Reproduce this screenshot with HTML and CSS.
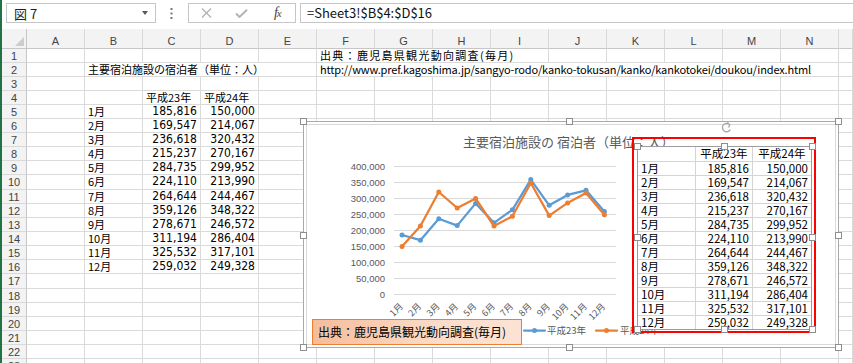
FILE: index.html
```html
<!DOCTYPE html>
<html lang="ja">
<head>
  <meta charset="UTF-8">
  <meta name="viewport" content="width=device-width, initial-scale=1.0">
  <title>主要宿泊施設の宿泊者</title>
  <link rel="stylesheet" href="styles.css">
</head>
<body>
  <div class="app">
    <div class="formula-bar">
      <div class="name-box"><span>図 7</span><span class="drop"></span></div>
      <svg class="dots" width="3" height="11" viewBox="0 0 3 11">
        <rect x="0.5" y="0" width="2" height="2"/>
        <rect x="0.5" y="4.5" width="2" height="2"/>
        <rect x="0.5" y="9" width="2" height="2"/>
      </svg>
      <div class="fx-box">
        <svg class="cancel" width="11" height="10" viewBox="0 0 11 10">
          <path d="M1 0.5 L10 9.5 M10 0.5 L1 9.5"/>
        </svg>
        <svg class="enter" width="13" height="9" viewBox="0 0 13 9">
          <path d="M1 4.5 L4.5 8 L12 0.8"/>
        </svg>
        <i class="fx">f<span>x</span></i>
      </div>
      <div class="formula-input">=Sheet3!$B$4:$D$16</div>
    </div>
    <div class="sheet" id="sheet"></div>
  </div>

  <!-- chart object floating over the sheet -->
  <div class="chart">
    <svg id="chart" width="536" height="227" viewBox="0 0 536 227">
      <defs>
        <linearGradient id="sourceFill" x1="0" y1="0" x2="1" y2="0">
          <stop offset="0" stop-color="#f6bc9a"/>
          <stop offset="0.6" stop-color="#fbdcc9"/>
          <stop offset="1" stop-color="#fce3d4"/>
        </linearGradient>
      </defs>
      <rect class="frame" x="0.5" y="0.5" width="535" height="226"/>
      <rect class="chart-area" x="3.5" y="3.5" width="529" height="220"/>
      <text class="chart-title" x="160" y="26">主要宿泊施設の 宿泊者（単位：人）</text>
      <g id="grid"></g>
      <g id="categories"></g>
      <g id="series"></g>
      <rect class="source-box" x="9.5" y="198.5" width="209" height="25"/>
      <text class="source-text" x="15" y="215.5">出典：鹿児島県観光動向調査(毎月)</text>
      <g class="legend">
        <line class="line-23" x1="221" y1="209.5" x2="242" y2="209.5"/>
        <circle class="dot-23" cx="231.5" cy="209.5" r="2.5"/>
        <text x="244" y="213">平成23年</text>
        <line class="line-24" x1="293" y1="209.5" x2="314" y2="209.5"/>
        <circle class="dot-24" cx="303.5" cy="209.5" r="2.5"/>
        <text x="317" y="213">平成24年</text>
      </g>
      <g class="handles">
        <rect x="-2.5" y="-2.5" width="6" height="6"/>
        <rect x="263.5" y="-2.5" width="6" height="6"/>
        <rect x="532.5" y="-2.5" width="6" height="6"/>
        <rect x="-2.5" y="111.5" width="6" height="6"/>
        <rect x="532.5" y="111.5" width="6" height="6"/>
        <rect x="-2.5" y="223.5" width="6" height="6"/>
        <rect x="263.5" y="223.5" width="6" height="6"/>
        <rect x="532.5" y="223.5" width="6" height="6"/>
      </g>
    </svg>
  </div>

  <div class="red-frame"></div>
  <div class="picture" id="picture"></div>

  <!-- selection handles of the linked picture -->
  <svg class="picture-handles" width="190" height="215" viewBox="0 0 190 215">
    <path class="rotate" d="M97.6 4.6 A4.2 4.2 0 1 0 98.3 9.6 M95.4 2.6 L97.8 4.8 L96.6 7.4"/>
    <g class="handles">
      <rect x="2.5" y="23.5" width="6" height="6"/>
      <rect x="89.5" y="23.5" width="6" height="6"/>
      <rect x="177.5" y="23.5" width="6" height="6"/>
      <rect x="2.5" y="114.5" width="6" height="6"/>
      <rect x="177.5" y="114.5" width="6" height="6"/>
      <rect x="2.5" y="206.5" width="6" height="6"/>
      <rect x="89.5" y="206.5" width="6" height="6"/>
      <rect x="177.5" y="206.5" width="6" height="6"/>
    </g>
  </svg>

  <script>
    const months = ['1月', '2月', '3月', '4月', '5月', '6月', '7月', '8月', '9月', '10月', '11月', '12月'];
    const h23 = [185816, 169547, 236618, 215237, 284735, 224110, 264644, 359126, 278671, 311194, 325532, 259032];
    const h24 = [150000, 214067, 320432, 270167, 299952, 213990, 244467, 348322, 246572, 286404, 317101, 249328];
    const fmt = n => n.toLocaleString('en-US');

    function add(parent, className, text) {
      const node = document.createElement('div');
      node.className = className;
      if (text !== undefined) node.textContent = text;
      parent.appendChild(node);
      return node;
    }

    // Sheet cells
    const cells = {
      F1: '出典：鹿児島県観光動向調査(毎月)',
      B2: '主要宿泊施設の宿泊者（単位：人）',
      F2: 'http://www.pref.kagoshima.jp/sangyo-rodo/kanko-tokusan/kanko/kankotokei/doukou/index.html',
      C4: '平成23年',
      D4: '平成24年'
    };
    months.forEach((m, i) => {
      cells['B' + (i + 5)] = m;
      cells['C' + (i + 5)] = h23[i];
      cells['D' + (i + 5)] = h24[i];
    });
    // long texts that run over the next cells
    const spills = { F1: 'spill note', B2: 'spill', F2: 'spill url' };

    const sheet = document.getElementById('sheet');
    const columns = 'ABCDEFGHIJKLMNO'.split('');
    add(sheet, 'corner');
    columns.forEach(c => add(sheet, 'col-head', c === 'O' ? '' : c));
    for (let r = 1; r <= 23; r++) {
      add(sheet, 'row-head', r);
      columns.forEach(c => {
        const key = c + r;
        const value = cells[key];
        const cell = add(sheet, 'cell');
        if (value === undefined) return;
        if (typeof value === 'number') {
          cell.classList.add('num');
          cell.textContent = fmt(value);
        } else if (spills[key]) {
          const span = document.createElement('span');
          span.className = spills[key];
          span.textContent = value;
          cell.appendChild(span);
        } else {
          cell.textContent = value;
        }
      });
    }

    // Linked picture of B4:D16
    const picture = document.getElementById('picture');
    add(picture, 'pic-cell', '');
    add(picture, 'pic-cell head', '平成23年');
    add(picture, 'pic-cell head', '平成24年');
    months.forEach((m, i) => {
      add(picture, 'pic-cell', m);
      add(picture, 'pic-cell num', fmt(h23[i]));
      add(picture, 'pic-cell num', fmt(h24[i]));
    });

    // Line chart
    const svgNS = 'http://www.w3.org/2000/svg';
    function svgEl(tag, attrs, parent, text) {
      const node = document.createElementNS(svgNS, tag);
      Object.entries(attrs).forEach(([k, v]) => node.setAttribute(k, v));
      if (text !== undefined) node.textContent = text;
      parent.appendChild(node);
      return node;
    }

    const zero = 173.5;
    const xAt = i => 99 + i * 18.4;
    const yAt = v => zero - v / 400000 * 128;

    const grid = document.getElementById('grid');
    for (let k = 0; k <= 8; k++) {
      const y = zero - k * 16;
      svgEl('line', { class: 'gridline', x1: 91, x2: 313, y1: y, y2: y }, grid);
      svgEl('text', { class: 'axis-label', x: 82, y: y + 3.3 }, grid, fmt(k * 50000));
    }

    const categories = document.getElementById('categories');
    months.forEach((m, i) => {
      const ax = xAt(i) + 1.5;
      const ay = 186;
      svgEl('text', { class: 'cat-label', x: ax, y: ay, transform: `rotate(-45 ${ax} ${ay})` }, categories, m);
    });

    const series = document.getElementById('series');
    [[h23, '23'], [h24, '24']].forEach(([data, name]) => {
      const points = data.map((v, i) => `${xAt(i).toFixed(1)},${yAt(v).toFixed(1)}`).join(' ');
      svgEl('polyline', { class: 'line-' + name, points: points }, series);
      data.forEach((v, i) => {
        svgEl('circle', { class: 'dot-' + name, cx: xAt(i).toFixed(1), cy: yAt(v).toFixed(1), r: 2.5 }, series);
      });
    });
  </script>
</body>
</html>
```

FILE: styles.css
```css
body {
  margin: 0;
  position: relative;
  width: 853px;
  height: 363px;
  overflow: hidden;
  background: #ffffff;
  font-family: 'Noto Sans CJK JP', sans-serif;
  color: #000000;
}

.app {
  height: 363px;
  border-left: 2px solid #217346;
}

/* Formula bar */
.formula-bar {
  display: flex;
  align-items: flex-start;
  height: 29px;
  padding: 3px 0 0 4px;
  box-sizing: border-box;
}

.name-box {
  display: flex;
  align-items: center;
  width: 150px;
  height: 20px;
  padding: 0 7px 0 7px;
  box-sizing: border-box;
  border: 1px solid #c6c6c6;
  font-size: 13px;
  color: #222222;
}

.drop {
  margin-left: auto;
  border-left: 3.5px solid transparent;
  border-right: 3.5px solid transparent;
  border-top: 4px solid #5a5a5a;
}

.dots {
  margin: 5px 0 0 14px;
  fill: #777777;
}

.fx-box {
  display: grid;
  grid-template-columns: repeat(3, 1fr);
  align-items: center;
  justify-items: center;
  width: 108px;
  height: 20px;
  margin-left: 15px;
  box-sizing: border-box;
  border: 1px solid #c6c6c6;
}

.cancel path {
  fill: none;
  stroke: #b4b4b4;
  stroke-width: 1.4;
}

.enter path {
  fill: none;
  stroke: #b4b4b4;
  stroke-width: 2;
}

.fx {
  font-family: 'Liberation Serif', serif;
  font-size: 14px;
  color: #444444;
  letter-spacing: -1px;
}

.fx span {
  font-size: 11px;
}

.formula-input {
  flex: 1;
  height: 20px;
  margin-left: 4px;
  padding-left: 6px;
  box-sizing: border-box;
  border: 1px solid #c6c6c6;
  border-right: none;
  font-size: 13px;
  line-height: 18px;
  color: #111111;
}

/* Sheet grid */
.sheet {
  display: grid;
  grid-template-columns: 25px repeat(14, 58px) 1fr;
  grid-template-rows: 20px repeat(9, 14px) 15px repeat(6, 14px) 15px repeat(6, 14px);
}

.corner,
.col-head,
.row-head {
  background: #f3f3f3;
  color: #444444;
  box-sizing: border-box;
}

.corner {
  display: flex;
  justify-content: flex-end;
  align-items: flex-end;
  padding: 0 2px 2px 0;
  border-right: 1px solid #c6c6c6;
  border-bottom: 1px solid #c6c6c6;
}

.corner::after {
  content: "";
  border-left: 9px solid transparent;
  border-bottom: 9px solid #cdcdcd;
}

.col-head {
  padding-top: 5px;
  border-right: 1px solid #d9d9d9;
  border-bottom: 1px solid #c6c6c6;
  font-family: 'Liberation Sans', sans-serif;
  font-size: 11px;
  line-height: 14px;
  text-align: center;
}

.row-head {
  border-right: 1px solid #c6c6c6;
  border-bottom: 1px solid #d9d9d9;
  font-family: 'Liberation Sans', sans-serif;
  font-size: 11px;
  line-height: 14px;
  text-align: center;
}

.cell {
  padding: 0 3px;
  box-sizing: border-box;
  border-right: 1px solid #dadada;
  border-bottom: 1px solid #dadada;
  font-size: 11px;
  line-height: 13px;
  white-space: nowrap;
}

.cell.num {
  font-family: 'Liberation Sans Narrow', 'DejaVu Sans Condensed', 'Noto Sans CJK JP', sans-serif;
  font-size: 12px;
  text-align: right;
}

.spill {
  position: relative;
  z-index: 1;
  display: inline-block;
  height: 13px;
  padding-right: 2px;
  background: #ffffff;
}

.note {
  letter-spacing: 1.3px;
}

.url {
  letter-spacing: -0.15px;
}

/* Chart */
.chart {
  position: absolute;
  left: 303px;
  top: 121px;
}

.chart svg,
.picture-handles {
  display: block;
  overflow: visible;
}

.frame {
  fill: #ffffff;
  stroke: #a9a9a9;
}

.chart-area {
  fill: #ffffff;
  stroke: #d9d9d9;
}

.handles rect {
  fill: #ffffff;
  stroke: #8e8e8e;
}

.chart-title {
  font-size: 13px;
  fill: #595959;
}

.gridline {
  stroke: #d9d9d9;
}

.axis-label {
  font-family: 'Liberation Sans', sans-serif;
  font-size: 9.5px;
  fill: #595959;
  text-anchor: end;
}

.cat-label {
  font-size: 9px;
  fill: #595959;
  text-anchor: end;
}

.line-23,
.line-24 {
  fill: none;
  stroke-width: 2.25;
  stroke-linejoin: round;
  stroke-linecap: round;
}

.line-23 { stroke: #5b9bd5; }
.line-24 { stroke: #ed7d31; }
.dot-23 { fill: #5b9bd5; }
.dot-24 { fill: #ed7d31; }

.source-box {
  fill: url(#sourceFill);
  stroke: #ed7d31;
}

.source-text {
  font-size: 12px;
  fill: #000000;
}

.legend text {
  font-size: 9.5px;
  fill: #595959;
}

/* Linked picture */
.red-frame {
  position: absolute;
  left: 632px;
  top: 137px;
  width: 184px;
  height: 196px;
  box-sizing: border-box;
  border: 2px solid #ff0000;
}

.picture {
  position: absolute;
  left: 637px;
  top: 146px;
  display: grid;
  grid-template-columns: 58px 57px 58px;
  grid-template-rows: 15px repeat(11, 14px) 13px;
  border: 1px solid #9c9c9c;
  background: #ffffff;
}

.pic-cell {
  padding: 0 3px;
  border-right: 1px solid #d4d4d4;
  border-bottom: 1px solid #d4d4d4;
  font-size: 11.5px;
  line-height: 13px;
  white-space: nowrap;
}

.pic-cell:nth-child(3n) {
  border-right: none;
}

.pic-cell:nth-last-child(-n+3) {
  border-bottom: none;
}

.pic-cell.head {
  padding: 0 1px;
  text-align: center;
}

.pic-cell.num {
  text-align: right;
}

.picture-handles {
  position: absolute;
  left: 632px;
  top: 120px;
}

.rotate {
  fill: none;
  stroke: #a6a6a6;
  stroke-width: 1.3;
}
```
